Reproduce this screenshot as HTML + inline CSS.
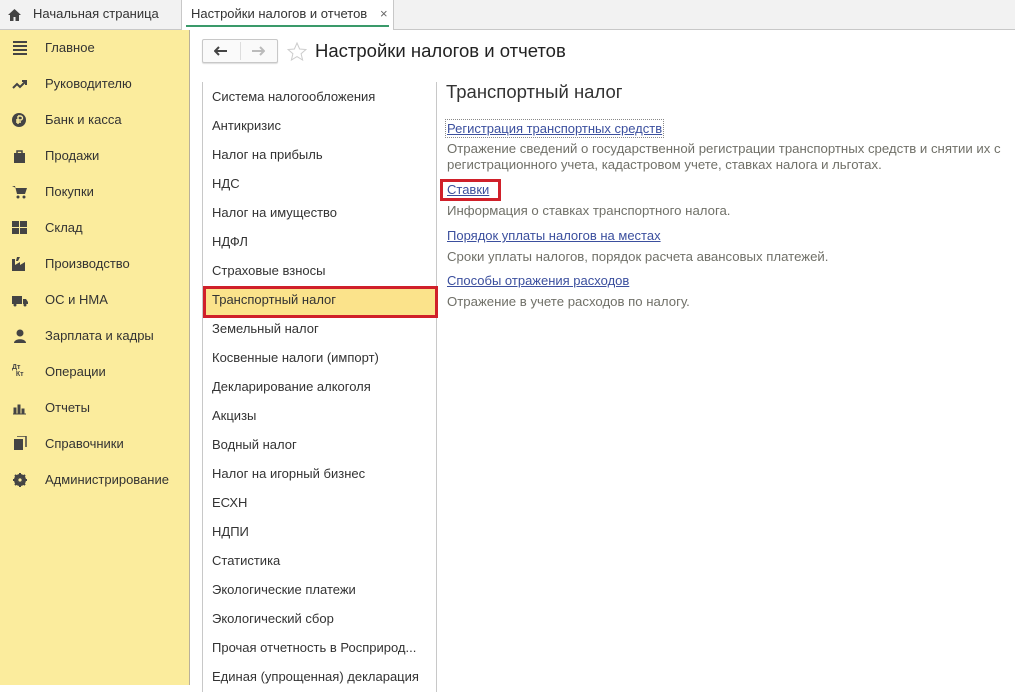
<!DOCTYPE html><html><head><meta charset="utf-8"><style>
*{margin:0;padding:0;box-sizing:border-box}
body{width:1015px;height:685px;overflow:hidden;background:#fff;font-family:"Liberation Sans",sans-serif;font-size:13px;color:#333;position:relative}
.tabs{position:absolute;left:0;top:0;width:1015px;height:30px;background:#f2f2f2;border-bottom:1px solid #c8c8c8}
.tab1{position:absolute;left:8px;top:6px;font-size:13px;color:#333}
.tab2{position:absolute;left:181px;top:0;width:213px;height:30px;background:#fff;border-left:1px solid #c8c8c8;border-right:1px solid #c8c8c8;}
.tab2 span{position:absolute;left:9px;top:6px}
.tab2 i{position:absolute;left:4px;right:4px;bottom:3px;height:2px;background:#3a9a6a}
.side{position:absolute;left:0;top:30px;width:190px;height:655px;background:#fbec9d;border-right:1px solid #b9b09a}
.mi{position:absolute;left:45px;font-size:13px;color:#333}
.ic{position:absolute;left:12px;width:16px;height:14px}
.nav{position:absolute;left:202px;top:39px;width:76px;height:24px;border:1px solid #c8c8c8;border-radius:2px;background:#fafafa;box-shadow:0 1px 1px #ddd}
.nav b{position:absolute;left:37px;top:2px;bottom:2px;width:1px;background:#ddd}
.title{position:absolute;left:315px;top:40px;font-size:18.5px;color:#222}
.list{position:absolute;left:202px;top:82px;width:235px;height:610px;border-left:1px solid #c8c8c8;border-right:1px solid #c8c8c8}
.li{position:absolute;left:9px;font-size:13px;color:#333;white-space:nowrap}
.sel{position:absolute;left:0;top:204px;width:235px;height:32px;background:#fbe38b;border:3px solid #d0202a}
.h{position:absolute;left:446px;top:81px;font-size:18.5px;color:#333}
.a{position:absolute;left:447px;color:#3b4f9e;text-decoration:underline;font-size:13px}
.d{position:absolute;left:447px;color:#707068;font-size:13.2px;line-height:16px}
</style></head><body>
<div class="tabs">
<svg style="position:absolute;left:8px;top:9px" width="13" height="12" viewBox="0 0 13 12"><path d="M6.5 0L0 6h2v6h3.5V8h2v4H11V6h2z" fill="#444"/></svg>
<span class="tab1" style="left:33px">Начальная страница</span>
<div class="tab2"><span>Настройки налогов и отчетов</span><span style="left:198px;color:#666">×</span><i></i></div>
</div>
<div class="side">
<svg class="ic" style="top:11px" viewBox="0 0 16 14"><path d="M1 1h14M1 5h14M1 9h14M1 13h14" stroke="#444" stroke-width="2"/></svg>
<div class="mi" style="top:10px">Главное</div>
<svg class="ic" style="top:47px" viewBox="0 0 16 14"><path d="M1 11l4-4 3 3 5-5M10 4h4v4" stroke="#444" stroke-width="2" fill="none"/></svg>
<div class="mi" style="top:46px">Руководителю</div>
<svg class="ic" style="top:83px" viewBox="0 0 16 14"><circle cx="7" cy="7" r="7" fill="#444"/><path d="M6 3v8M6 3h2.5a2 2 0 010 4H4M4 9h5" stroke="#fbec9d" stroke-width="1.4" fill="none"/></svg>
<div class="mi" style="top:82px">Банк и касса</div>
<svg class="ic" style="top:119px" viewBox="0 0 16 14"><rect x="2" y="4" width="11" height="10" fill="#444"/><path d="M5 5V2h5v3" stroke="#444" fill="none" stroke-width="1.5"/></svg>
<div class="mi" style="top:118px">Продажи</div>
<svg class="ic" style="top:155px" viewBox="0 0 16 14"><path d="M0 1h3l2 8h8l2-6H4" fill="#444"/><circle cx="6" cy="12" r="1.5" fill="#444"/><circle cx="12" cy="12" r="1.5" fill="#444"/></svg>
<div class="mi" style="top:154px">Покупки</div>
<svg class="ic" style="top:191px" viewBox="0 0 16 14"><path d="M0 0h7v6H0zM8 0h7v6H8zM0 7h7v6H0zM8 7h7v6H8z" fill="#444"/></svg>
<div class="mi" style="top:190px">Склад</div>
<svg class="ic" style="top:227px" viewBox="0 0 16 14"><path d="M0 14V2h3v6l5-3v3l5-3v9z M5 0h3L6 4H4z" fill="#444"/></svg>
<div class="mi" style="top:226px">Производство</div>
<svg class="ic" style="top:263px" viewBox="0 0 16 14"><path d="M0 3h10v8H0zM11 6h3l2 3v2h-5z" fill="#444"/><circle cx="3" cy="12" r="1.5" fill="#444"/><circle cx="13" cy="12" r="1.5" fill="#444"/></svg>
<div class="mi" style="top:262px">ОС и НМА</div>
<svg class="ic" style="top:299px" viewBox="0 0 16 14"><circle cx="8" cy="4" r="3.5" fill="#444"/><path d="M2 14c0-5 12-5 12 0z" fill="#444"/></svg>
<div class="mi" style="top:298px">Зарплата и кадры</div>
<div class="ic" style="top:334px;font-size:7px;font-weight:bold;color:#444;line-height:7px">Дт<br>&nbsp;&nbsp;Кт</div>
<div class="mi" style="top:334px">Операции</div>
<svg class="ic" style="top:371px" viewBox="0 0 16 14"><path d="M1 13h13M2 7h2v6H2zM6 4h2v9H6zM10 8h2v5h-2z" stroke="#444" fill="#444"/></svg>
<div class="mi" style="top:370px">Отчеты</div>
<svg class="ic" style="top:406px" viewBox="0 0 16 14"><path d="M2 3h9v11H2z" fill="#444"/><path d="M5 0h9v11" stroke="#444" fill="none" stroke-width="1.5"/></svg>
<div class="mi" style="top:406px">Справочники</div>
<svg class="ic" style="top:443px" viewBox="0 0 16 14"><circle cx="8" cy="7" r="4.5" fill="none" stroke="#444" stroke-width="3"/><path d="M8 0v14M1 7h14M3 2l10 10M13 2L3 12" stroke="#444" stroke-width="2"/><circle cx="8" cy="7" r="1.6" fill="#fbec9d"/></svg>
<div class="mi" style="top:442px">Администрирование</div>
</div>
<div class="nav"><b></b>
<svg style="position:absolute;left:11px;top:6px" width="14" height="10" viewBox="0 0 14 10"><path d="M1 5h12M5 1L1 5l4 4" stroke="#444" stroke-width="2" fill="none"/></svg>
<svg style="position:absolute;left:48px;top:6px" width="14" height="10" viewBox="0 0 14 10"><path d="M1 5h12M9 1l4 4-4 4" stroke="#bbb" stroke-width="2" fill="none"/></svg>
</div>
<svg style="position:absolute;left:287px;top:42px" width="20" height="19" viewBox="0 0 20 19"><path d="M10 1l2.6 6 6.4.5-4.9 4.2 1.5 6.3L10 14.6 4.4 18l1.5-6.3L1 7.5 7.4 7z" fill="none" stroke="#ccc"/></svg>
<div class="title">Настройки налогов и отчетов</div>
<div class="list">
<div class="sel"></div>
<div class="li" style="top:7px">Система налогообложения</div>
<div class="li" style="top:36px">Антикризис</div>
<div class="li" style="top:65px">Налог на прибыль</div>
<div class="li" style="top:94px">НДС</div>
<div class="li" style="top:123px">Налог на имущество</div>
<div class="li" style="top:152px">НДФЛ</div>
<div class="li" style="top:181px">Страховые взносы</div>
<div class="li" style="top:210px">Транспортный налог</div>
<div class="li" style="top:239px">Земельный налог</div>
<div class="li" style="top:268px">Косвенные налоги (импорт)</div>
<div class="li" style="top:297px">Декларирование алкоголя</div>
<div class="li" style="top:326px">Акцизы</div>
<div class="li" style="top:355px">Водный налог</div>
<div class="li" style="top:384px">Налог на игорный бизнес</div>
<div class="li" style="top:413px">ЕСХН</div>
<div class="li" style="top:442px">НДПИ</div>
<div class="li" style="top:471px">Статистика</div>
<div class="li" style="top:500px">Экологические платежи</div>
<div class="li" style="top:529px">Экологический сбор</div>
<div class="li" style="top:558px">Прочая отчетность в Росприрод...</div>
<div class="li" style="top:587px">Единая (упрощенная) декларация</div>
</div>
<div class="h">Транспортный налог</div>
<div class="a" style="top:121px;outline:1px dotted #888;outline-offset:1px">Регистрация транспортных средств</div>
<div class="d" style="top:141px">Отражение сведений о государственной регистрации транспортных средств и снятии их с<br>регистрационного учета, кадастровом учете, ставках налога и льготах.</div>
<div style="position:absolute;left:440px;top:179px;width:61px;height:22px;border:3px solid #d0202a"></div>
<div class="a" style="top:182px">Ставки</div>
<div class="d" style="top:203px">Информация о ставках транспортного налога.</div>
<div class="a" style="top:228px">Порядок уплаты налогов на местах</div>
<div class="d" style="top:249px">Сроки уплаты налогов, порядок расчета авансовых платежей.</div>
<div class="a" style="top:273px">Способы отражения расходов</div>
<div class="d" style="top:294px">Отражение в учете расходов по налогу.</div>
</body></html>
